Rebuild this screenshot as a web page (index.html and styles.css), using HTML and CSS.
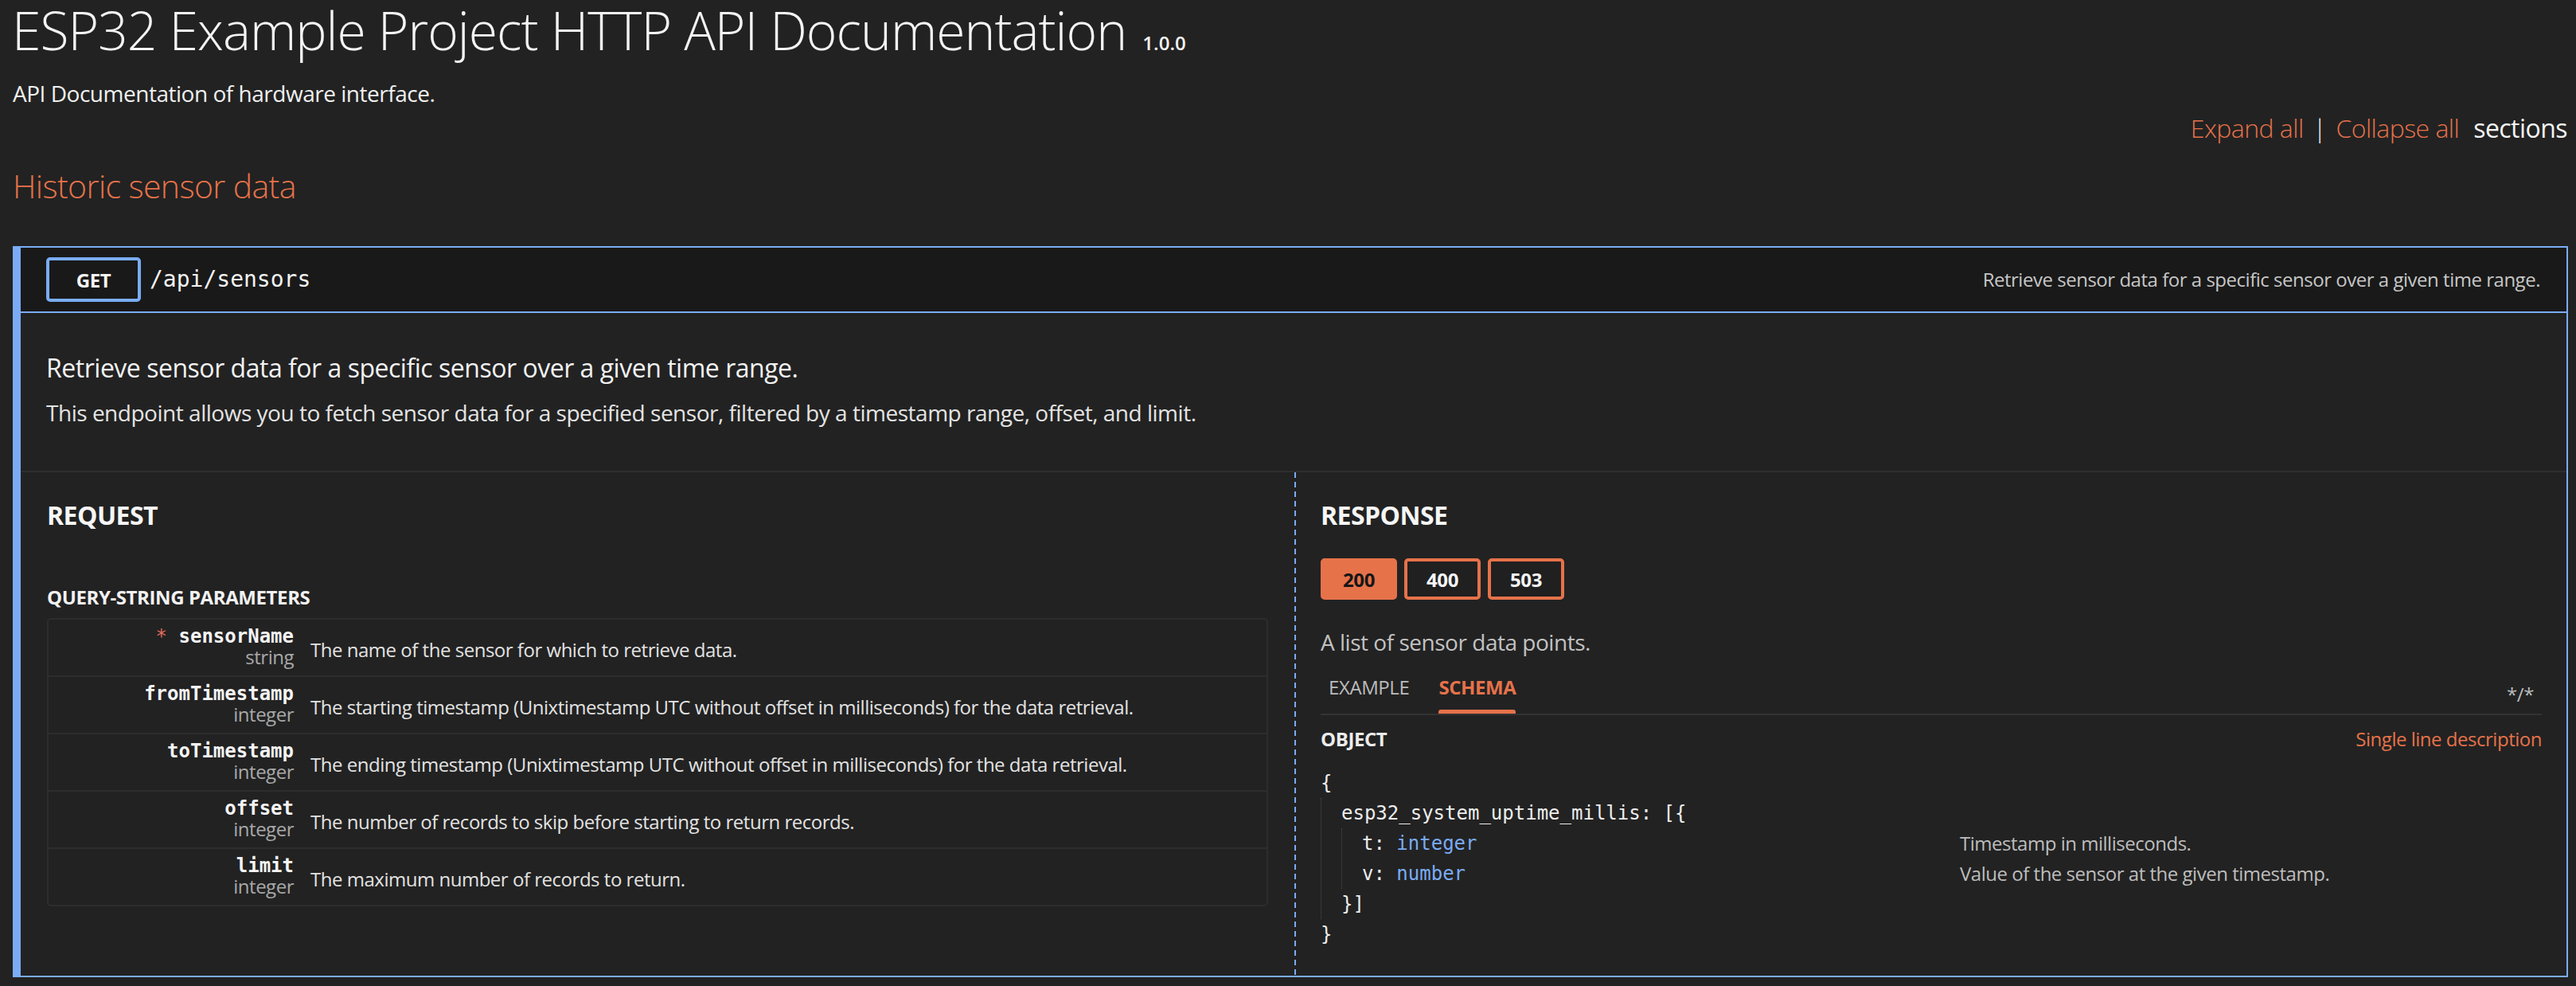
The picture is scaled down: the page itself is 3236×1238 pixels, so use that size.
FILE: index.html
```html
<!DOCTYPE html>
<html lang="en">
<head>
<meta charset="utf-8">
<title>ESP32 Example Project HTTP API Documentation</title>
<link rel="stylesheet" href="styles.css">
</head>
<body>
<header class="doc-header">
  <h1 class="title">ESP32 Example Project HTTP API Documentation <span class="version">1.0.0</span></h1>
  <p class="subtitle">API Documentation of hardware interface.</p>
  <div class="toolbar">
    <a class="link">Expand all</a><span class="sep">|</span><a class="link">Collapse all</a><span class="sections">sections</span>
  </div>
</header>

<section class="tag">
  <h2 class="tag-title">Historic sensor data</h2>

  <div class="endpoint">
    <div class="ep-head">
      <span class="method">GET</span>
      <span class="path">/api/sensors</span>
      <span class="ep-summary">Retrieve sensor data for a specific sensor over a given time range.</span>
    </div>

    <div class="ep-desc">
      <p class="ep-desc-title">Retrieve sensor data for a specific sensor over a given time range.</p>
      <p class="ep-desc-text">This endpoint allows you to fetch sensor data for a specified sensor, filtered by a timestamp range, offset, and limit.</p>
    </div>

    <div class="req-resp">
      <div class="col request">
        <h3 class="col-title">REQUEST</h3>
        <div class="section-label">QUERY-STRING PARAMETERS</div>
        <div class="params">
          <div class="param-row">
            <div class="pname-cell"><div class="pname"><span class="req">*</span> sensorName</div><div class="ptype">string</div></div>
            <div class="pdesc">The name of the sensor for which to retrieve data.</div>
          </div>
          <div class="param-row">
            <div class="pname-cell"><div class="pname">fromTimestamp</div><div class="ptype">integer</div></div>
            <div class="pdesc">The starting timestamp (Unixtimestamp UTC without offset in milliseconds) for the data retrieval.</div>
          </div>
          <div class="param-row">
            <div class="pname-cell"><div class="pname">toTimestamp</div><div class="ptype">integer</div></div>
            <div class="pdesc">The ending timestamp (Unixtimestamp UTC without offset in milliseconds) for the data retrieval.</div>
          </div>
          <div class="param-row">
            <div class="pname-cell"><div class="pname">offset</div><div class="ptype">integer</div></div>
            <div class="pdesc">The number of records to skip before starting to return records.</div>
          </div>
          <div class="param-row">
            <div class="pname-cell"><div class="pname">limit</div><div class="ptype">integer</div></div>
            <div class="pdesc">The maximum number of records to return.</div>
          </div>
        </div>
      </div>

      <div class="col response">
        <h3 class="col-title">RESPONSE</h3>
        <div class="status-row">
          <span class="status active">200</span>
          <span class="status">400</span>
          <span class="status">503</span>
        </div>
        <p class="resp-desc">A list of sensor data points.</p>
        <div class="tab-row">
          <div class="tab"><span class="tab-label">EXAMPLE</span><span class="tab-bar"></span></div>
          <div class="tab active"><span class="tab-label">SCHEMA</span><span class="tab-bar"></span></div>
          <span class="mime">*/*</span>
        </div>
        <div class="schema-head">
          <span class="obj-label">OBJECT</span>
          <a class="single-line">Single line description</a>
        </div>
        <div class="tree">
          <div class="tree-row"><span class="tree-key">{</span></div>
          <div class="tree-children">
            <div class="tree-row"><span class="tree-key">esp32_system_uptime_millis: [{</span></div>
            <div class="tree-children">
              <div class="tree-row"><span class="tree-key">t: <span class="ttype">integer</span></span><span class="tree-desc">Timestamp in milliseconds.</span></div>
              <div class="tree-row"><span class="tree-key">v: <span class="ttype">number</span></span><span class="tree-desc">Value of the sensor at the given timestamp.</span></div>
            </div>
            <div class="tree-row"><span class="tree-key">}]</span></div>
          </div>
          <div class="tree-row"><span class="tree-key">}</span></div>
        </div>
      </div>
    </div>
  </div>
</section>
</body>
</html>
```

FILE: styles.css
```css
html, body {
  margin: 0;
  background: #222222;
}

body {
  font-family: "Open Sans", "Liberation Sans", sans-serif;
  letter-spacing: -0.03em;
  color: #e6e6e6;
}

.doc-header {
  padding: 0 11px 0 15px;
}

.title {
  margin: 0;
  font-size: 66px;
  line-height: 74px;
  font-weight: 300;
  letter-spacing: -0.015em;
  color: #f4f4f4;
}

.version {
  font-size: 24px;
  line-height: 1;
  font-weight: 600;
  letter-spacing: 0;
  margin-left: 4px;
}

.subtitle {
  margin: 25px 0 0 1px;
  font-size: 28px;
  line-height: 36px;
  color: #f0f0f0;
}

.toolbar {
  margin-top: 6px;
  display: flex;
  justify-content: flex-end;
  align-items: baseline;
  font-size: 32px;
  line-height: 40px;
  font-weight: 300;
  letter-spacing: -0.017em;
}

.link {
  color: #e6724a;
}

.sep {
  margin: 0 12px;
  color: #f0f0f0;
}

.sections {
  margin-left: 18px;
  color: #f4f4f4;
  font-weight: 400;
}

.tag {
  padding: 0 10px 0 16px;
}

.tag-title {
  margin: 27px 0 0 0;
  font-size: 41px;
  line-height: 50px;
  font-weight: 300;
  letter-spacing: -0.015em;
  color: #e6724a;
}

.endpoint {
  margin-top: 51px;
  border: 2px solid #7aacf5;
  border-left-width: 10px;
}

.ep-head {
  display: flex;
  align-items: center;
  padding: 12px 33px 12px 32px;
  background: #191919;
  border-bottom: 2px solid #7aacf5;
}

.method {
  box-sizing: border-box;
  width: 119px;
  height: 56px;
  border: 4px solid #7aacf5;
  border-radius: 5px;
  display: flex;
  align-items: center;
  justify-content: center;
  font-size: 24px;
  font-weight: 700;
  letter-spacing: -0.017em;
  color: #f6f6f6;
}

.path {
  margin-left: 11px;
  font-family: "DejaVu Sans Mono", "Liberation Mono", monospace;
  letter-spacing: 0;
  font-size: 28px;
  line-height: 32px;
  color: #f2f2f2;
}

.ep-summary {
  margin-left: auto;
  font-size: 24px;
  line-height: 30px;
  color: #c6c6c6;
}

.ep-desc {
  padding: 47px 32px 53px;
  border-bottom: 2px solid #2e2e2e;
}

.ep-desc-title {
  margin: 0;
  font-size: 32px;
  line-height: 44px;
  color: #f2f2f2;
}

.ep-desc-text {
  margin: 14px 0 0;
  font-size: 28px;
  line-height: 40px;
  color: #e4e4e4;
}

.req-resp {
  display: flex;
}

.col {
  flex: 1 1 0;
  min-width: 0;
  padding: 34px 33px 33px 33px;
}

.response {
  padding-right: 31px;
  background-image: linear-gradient(to bottom, #7aacf5 0, #7aacf5 7px, transparent 7px, transparent 12px);
  background-size: 2px 12px;
  background-repeat: repeat-y;
  background-position: 0 0;
}

.col-title {
  margin: 0;
  font-size: 32px;
  line-height: 40px;
  font-weight: 700;
  letter-spacing: -0.017em;
  color: #f6f6f6;
}

.section-label {
  margin-top: 68px;
  font-size: 24px;
  line-height: 30px;
  font-weight: 700;
  letter-spacing: -0.017em;
  color: #f2f2f2;
}

.params {
  margin-top: 11px;
  border: 2px solid #2d2d2d;
  border-radius: 5px;
}

.param-row {
  display: grid;
  grid-template-columns: 320px 1fr;
  border-top: 2px solid #2d2d2d;
}

.param-row:first-child {
  border-top: 0;
}

.pname-cell {
  text-align: right;
  padding: 7px 12px 11px 0;
}

.pname {
  font-family: "DejaVu Sans Mono", "Liberation Mono", monospace;
  letter-spacing: 0;
  font-size: 24px;
  line-height: 28px;
  font-weight: 700;
  color: #f4f4f4;
}

.req {
  color: #e06c5c;
  font-weight: 400;
}

.ptype {
  font-size: 24px;
  line-height: 24px;
  color: #a8a8a8;
}

.pdesc {
  padding: 22px 0 0 9px;
  font-size: 24px;
  line-height: 32px;
  color: #e2e2e2;
}

.status-row {
  margin-top: 34px;
  display: flex;
  gap: 9px;
}

.status {
  box-sizing: border-box;
  width: 96px;
  height: 52px;
  border: 4px solid #e6724a;
  border-radius: 5px;
  display: flex;
  align-items: center;
  justify-content: center;
  font-size: 24px;
  font-weight: 700;
  letter-spacing: -0.017em;
  color: #f6f6f6;
  background: #202020;
}

.status.active {
  background: #e6724a;
  color: #161616;
}

.resp-desc {
  margin: 35px 0 0;
  font-size: 28px;
  line-height: 36px;
  color: #c2c2c2;
}

.tab-row {
  margin-top: 24px;
  display: flex;
  align-items: flex-end;
  border-bottom: 2px solid #333333;
}

.tab {
  display: flex;
  flex-direction: column;
  padding: 0 2px;
}

.tab:first-child {
  margin-left: 8px;
  margin-right: 33px;
}

.tab-label {
  font-size: 24px;
  line-height: 30px;
  letter-spacing: -0.017em;
  color: #bcbcbc;
}

.tab.active .tab-label {
  color: #e6724a;
  font-weight: 700;
}

.tab-bar {
  height: 5px;
  margin-top: 13px;
  border-radius: 3px 3px 0 0;
}

.tab.active .tab-bar {
  background: #e6724a;
}

.mime {
  margin-left: auto;
  align-self: center;
  padding-right: 10px;
  font-size: 24px;
  line-height: 30px;
  letter-spacing: -0.017em;
  color: #bcbcbc;
}

.schema-head {
  margin-top: 15px;
  display: flex;
  justify-content: space-between;
  align-items: baseline;
  font-size: 24px;
  line-height: 30px;
}

.obj-label {
  font-weight: 700;
  letter-spacing: -0.017em;
  color: #ececec;
}

.single-line {
  color: #e6724a;
}

.tree {
  margin-top: 21px;
  font-family: "DejaVu Sans Mono", "Liberation Mono", monospace;
  letter-spacing: 0;
  font-size: 24px;
  line-height: 38px;
  color: #ededed;
}

.tree-children {
  border-left: 1px dotted #4a4a4a;
  padding-left: 25px;
}

.tree-row {
  display: flex;
}

.tree-key {
  flex: 1 1 auto;
  white-space: pre;
}

.ttype {
  color: #7aacf5;
}

.tree-desc {
  flex: 0 0 731px;
  font-family: "Open Sans", "Liberation Sans", sans-serif;
  letter-spacing: -0.02em;
  font-size: 24px;
  line-height: 38px;
  color: #bdbdbd;
}
```
